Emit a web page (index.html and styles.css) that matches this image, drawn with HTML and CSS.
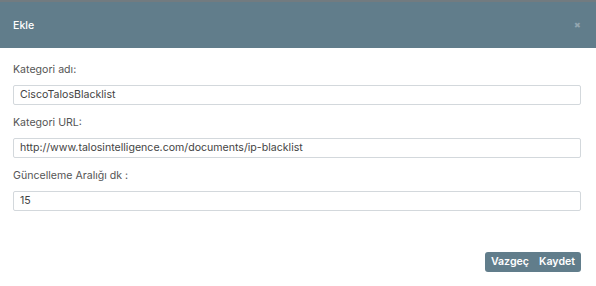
FILE: index.html
```html
<!DOCTYPE html>
<html lang="tr">
<head>
<meta charset="utf-8">
<link rel="stylesheet" href="styles.css">
</head>
<body>
<div class="modal">
  <div class="modal-header">
    <span class="title">Ekle</span>
    <span class="close">&#x2716;</span>
  </div>
  <div class="modal-body">
    <div class="field">
      <label class="label">Kategori adı:</label>
      <div class="input">CiscoTalosBlacklist</div>
    </div>
    <div class="field">
      <label class="label">Kategori URL:</label>
      <div class="input">http://www.talosintelligence.com/documents/ip-blacklist</div>
    </div>
    <div class="field">
      <label class="label">Güncelleme Aralığı dk :</label>
      <div class="input">15</div>
    </div>
  </div>
  <div class="modal-footer">
    <div class="btn-group">
      <button class="btn">Vazgeç</button>
      <button class="btn">Kaydet</button>
    </div>
  </div>
</div>
</body>
</html>
```
FILE: styles.css
```css
html, body {
  margin: 0;
  padding: 0;
  background: #fff;
}
body {
  font-family: Inter, "Noto Sans", sans-serif;
  font-size: 10.6px;
  color: #444;
}
.modal {
  width: 596px;
  height: 286px;
  display: flex;
  flex-direction: column;
}
.modal-header {
  height: 46px;
  background: #617d8b;
  border-top: 2px solid #727b80;
  display: flex;
  align-items: center;
  justify-content: space-between;
  padding: 0 15px 0 13px;
}
.title {
  color: #fff;
  font-size: 10.6px;
  font-weight: 500;
}
.close {
  color: #93a6b0;
  font-size: 8px;
}
.modal-body {
  padding: 15px 15px 0 13px;
  display: flex;
  flex-direction: column;
  gap: 11px;
}
.field {
  display: flex;
  flex-direction: column;
  gap: 8px;
}
.label {
  font-size: 10.6px;
  color: #555;
  line-height: 14px;
}
.input {
  height: 18px;
  border: 1px solid #d3d8dc;
  border-radius: 2px;
  padding: 0 6px;
  line-height: 18px;
  color: #444;
  font-size: 10.6px;
}
.modal-footer {
  display: flex;
  justify-content: flex-end;
  padding: 41px 15px 0 0;
}
.btn-group {
  display: flex;
  background: #617d8b;
  border-radius: 3px;
  height: 20px;
  padding: 0 1px;
}
.btn {
  background: transparent;
  border: 0;
  color: #fff;
  font-family: Inter, "Noto Sans", sans-serif;
  font-weight: 600;
  font-size: 10.6px;
  padding: 0 5px;
  line-height: 20px;
}
```
